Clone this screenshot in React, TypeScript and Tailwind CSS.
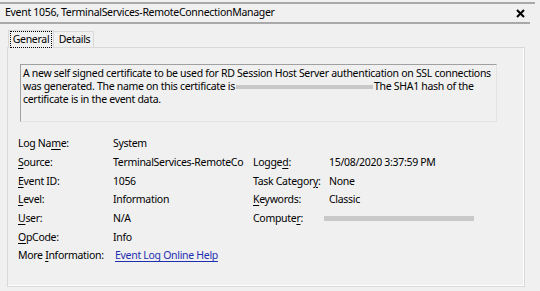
import React from 'react';

const Key = ({ children }: { children: React.ReactNode }) => <span className="underline underline-offset-2">{children}</span>;

const App = () => {
  const rows = [
    { label: <>Log Na<Key>m</Key>e:</>, value: 'System' },
    { label: <><Key>S</Key>ource:</>, value: 'TerminalServices-RemoteCo', label2: <>Logge<Key>d</Key>:</>, value2: '15/08/2020 3:37:59 PM' },
    { label: <><Key>E</Key>vent ID:</>, value: '1056', label2: <>Task Categor<Key>y</Key>:</>, value2: 'None' },
    { label: <><Key>L</Key>evel:</>, value: 'Information', label2: <><Key>K</Key>eywords:</>, value2: 'Classic' },
    { label: <><Key>U</Key>ser:</>, value: 'N/A', label2: <>Compute<Key>r</Key>:</>, redacted: true },
    { label: <><Key>O</Key>pCode:</>, value: 'Info' },
  ];

  return (
    <div className="w-[540px] h-[291px] bg-[#f0f0f0] overflow-hidden text-[10.5px] tracking-[-0.3px] text-black" style={{ fontFamily: '"Noto Sans", sans-serif' }}>
      {/* title bar */}
      <div className="mt-[2px] h-[2px] w-[535px] bg-[#a9a9a9]" />
      <div className="h-[18px] w-[530px] flex items-center justify-between pl-[5px] pr-[5px]">
        <span>Event 1056, TerminalServices-RemoteConnectionManager</span>
        <svg width="9" height="9" viewBox="0 0 9 9">
          <path d="M1 1 L8 8 M8 1 L1 8" stroke="#000" strokeWidth="2" />
        </svg>
      </div>
      <div className="h-[2px] w-[530px] bg-[#a9a9a9]" />

      {/* tabs */}
      <div className="mt-[6px] ml-[8px] flex items-end">
        <div className="h-[18px] w-[46px] border border-b-0 border-[#d9d9d9] bg-[#f0f0f0] flex items-center justify-center relative z-10 -mb-px pb-px">
          <span className="px-[2px] leading-[15px] border border-dotted border-black">General</span>
        </div>
        <div className="h-[16px] w-[40px] border border-l-0 border-b-0 border-[#d9d9d9] flex items-center justify-center pl-[2px]">
          Details
        </div>
      </div>

      {/* panel */}
      <div className="ml-[7px] w-[518px] h-[240px] border border-[#d9d9d9] shadow-[inset_-1px_-1px_0_#ffffff] pt-[16px] pl-[12px]">
        <div className="w-[477px] h-[58px] border border-[#a0a0a0] border-r-[#e3e3e3] border-b-[#e3e3e3] pl-[2px] pt-[2px] leading-[13px] whitespace-nowrap">
          <div>A new self signed certificate to be used for RD Session Host Server authentication on SSL connections</div>
          <div className="flex items-center">
            was generated. The name on this certificate is
            <span className="inline-block w-[137px] h-[4px] bg-[#c9c9c9] mx-[1px]" />
            The SHA1 hash of the
          </div>
          <div>certificate is in the event data.</div>
        </div>

        <div className="mt-[13px] -ml-[2px] whitespace-nowrap">
          {rows.map((r, i) => (
            <div key={i} className="h-[18.67px] grid grid-cols-[95px_140px_76px_1fr] items-center">
              <span>{r.label}</span>
              <span className="overflow-hidden">{r.value}</span>
              <span>{r.label2}</span>
              <span>
                {r.redacted ? <span className="block w-[150px] h-[5px] bg-[#c9c9c9] -ml-[5px]" /> : r.value2}
              </span>
            </div>
          ))}
          <div className="h-[18.67px] grid grid-cols-[97px_1fr] items-center">
            <span>More <Key>I</Key>nformation:</span>
            <span className="text-[#1f2fb0] underline underline-offset-2">Event Log Online Help</span>
          </div>
        </div>
      </div>
    </div>
  );
};

export default App;
